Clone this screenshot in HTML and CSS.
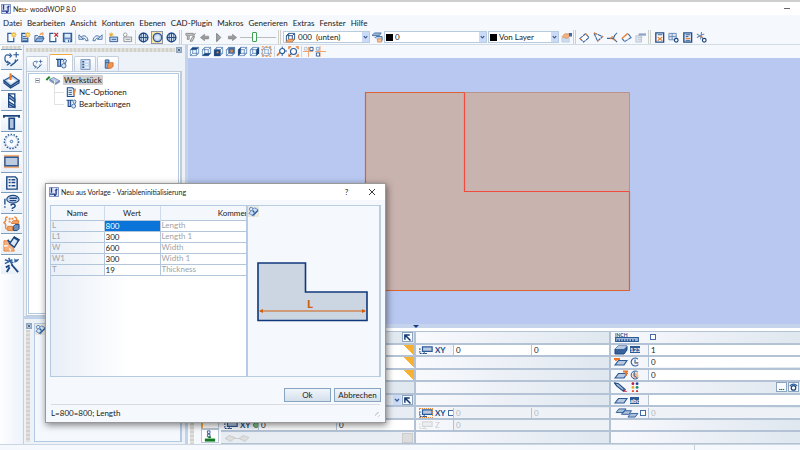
FILE: index.html
```html
<!DOCTYPE html>
<html lang="de">
<head>
<meta charset="utf-8">
<title>Neu- woodWOP 8.0</title>
<link rel="stylesheet" href="styles.css">
</head>
<body>
<svg class="defs" aria-hidden="true">
  <symbol id="logo" viewBox="0 0 12 12"><path d="M.5.500h11v11H.5z" fill="#dde5f6" stroke="#6678b4"/><path d="M3 1v6M1 8.500h6M8.500 3v5q0 2-2.500 2" fill="none" stroke="#243a8c" stroke-width="1.600"/><path d="M6.500 4.500l3-3 1 2z" fill="#243a8c"/></symbol>
  <symbol id="star" viewBox="0 0 12 12"><path d="M8.500 0v6M5.500 3h6M6.400.900l4.200 4.200M10.600.900L6.400 5.100" stroke="#f0b02c" stroke-width="1.200"/><circle cx="8.500" cy="3" r="1.200" fill="#fff3a8"/></symbol>
  <symbol id="new" viewBox="0 0 12 12"><path d="M6 1.500H2v9h6.500V6" fill="#f8fbff" stroke="#2b5a96" stroke-width="1.300"/><use href="#star"/></symbol>
  <symbol id="newlist" viewBox="0 0 12 12"><path d="M6 1.500H2v9h6.500V6" fill="#dce9f8" stroke="#2b5a96" stroke-width="1.300"/><path d="M3 5h4M3 7h5M3 9h5" stroke="#2b5a96"/><use href="#star"/></symbol>
  <symbol id="open" viewBox="0 0 12 12"><path d="M1 10.500V4h3l1 1h5v2" fill="#eaf2fb" stroke="#2b5a96"/><path d="M1 10.500L3.500 6.500H11l-2 4z" fill="#8fb0d8" stroke="#2b5a96"/><path d="M6 3.500l3-2M7 1.500l3-.5-.5 3" stroke="#ee8a3c" fill="none"/></symbol>
  <symbol id="close" viewBox="0 0 12 12"><path d="M6 1.500H2v9h6.500V6" fill="#f8fbff" stroke="#2b5a96" stroke-width="1.300"/><path d="M7 1l4 4M11 1L7 5" stroke="#c1272d" stroke-width="1.400"/></symbol>
  <symbol id="save" viewBox="0 0 12 12"><path d="M1.500 1.500h9v9h-9z" fill="#6b91c0" stroke="#2b5a96" stroke-width="1.200"/><path d="M3 2h6v4H3z" fill="#dfeaf7"/><path d="M3.500 8h5v3h-5z" fill="#e7eef8"/><path d="M7 8.500V11" stroke="#2b5a96"/></symbol>
  <symbol id="undo" viewBox="0 0 12 12"><path d="M1 3v5h5L1 3M3 6C6 2.500 10 4 11 9.500H8.500Q8 6 4.500 7" fill="#e8f0fa" stroke="#34649f" stroke-width=".9"/></symbol>
  <symbol id="redo" viewBox="0 0 12 12"><use href="#undo" transform="matrix(-1 0 0 1 12 0)"/></symbol>
  <symbol id="boxnew" viewBox="0 0 12 12"><path d="M2 5.500h8.500v5H2z" fill="#c4d7ee" stroke="#2b5a96"/><path d="M4 8h5" stroke="#2b5a96"/><path d="M3.500.500v5M1 3h5M1.700 1.200l3.600 3.600M5.300 1.200L1.700 4.800" stroke="#f0a92c"/></symbol>
  <symbol id="boxgray" viewBox="0 0 12 12"><path d="M2 5.500h8.500v5H2z" fill="#eee" stroke="#8b9098"/><path d="M4 8h5" stroke="#8b9098"/><circle cx="3.500" cy="3" r="2" fill="none" stroke="#999"/></symbol>
  <symbol id="globe" viewBox="0 0 12 12"><circle cx="6" cy="6" r="4.800" fill="#cfe0f4" stroke="#1c4680" stroke-width="1.400"/><path d="M1 6h10M6 1v10" stroke="#1c4680" stroke-width="1"/><ellipse cx="6" cy="6" rx="2.600" ry="4.800" fill="none" stroke="#1c4680" stroke-width=".8"/></symbol>
  <symbol id="disc" viewBox="0 0 12 12"><circle cx="6" cy="6" r="4.600" fill="#bcd0ec" stroke="#2b5a96" stroke-width="1.400"/><circle cx="6" cy="6" r="2.400" fill="#dfe9f7"/></symbol>
  <symbol id="clamp" viewBox="0 0 12 12"><path d="M1 1.500h8v2H1zM2.500 4v4h2V4M5.500 10l3-5h2L8 10z" fill="#d5d5d5" stroke="#858585"/><path d="M9 5l2.500-4" stroke="#858585"/></symbol>
  <symbol id="left" viewBox="0 0 12 12"><path d="M1.500 6L6 2.500v2h4.500v3H6v2z" fill="#9b9b9b" stroke="#7b7b7b" stroke-width=".6"/></symbol>
  <symbol id="right" viewBox="0 0 12 12"><path d="M10.500 6L6 2.500v2H1.500v3H6v2z" fill="#9b9b9b" stroke="#7b7b7b" stroke-width=".6"/></symbol>
  <symbol id="play" viewBox="0 0 12 12"><path d="M4 1.500L8.500 6 4 10.500z" fill="#a5a5a5" stroke="#777"/></symbol>
  <symbol id="cube" viewBox="0 0 12 12"><path d="M1.500 4h6.500v6.500H1.500zM4 1.500h6.500V8H4zM1.500 4L4 1.500M8 4l2.500-2.500M8 10.500L10.500 8M1.500 10.500L4 8" fill="none" stroke="#4c78ae" stroke-width=".8"/></symbol>
  <symbol id="v1" viewBox="0 0 12 12"><use href="#cube"/><path d="M1.500 4L4 1.500h6.500L8 4z" fill="#1c4680"/></symbol>
  <symbol id="v2" viewBox="0 0 12 12"><use href="#cube"/><path d="M1.500 10.500L4 8h6.500L8 10.500z" fill="#1c4680"/></symbol>
  <symbol id="v3" viewBox="0 0 12 12"><use href="#cube"/><path d="M1.200 4H8v7H1.200z" fill="#1c4680"/><path d="M4 6h2v2H4z" fill="#f0883a"/></symbol>
  <symbol id="v4" viewBox="0 0 12 12"><use href="#cube"/><path d="M4 1.500h6.500V8H4z" fill="#426da3"/><path d="M6 4h2.500v3H6z" fill="#f0883a"/></symbol>
  <symbol id="v5" viewBox="0 0 12 12"><use href="#cube"/><path d="M1.200 4L4 1.500V8l-2.800 3z" fill="#1c4680"/></symbol>
  <symbol id="v6" viewBox="0 0 12 12"><use href="#cube"/><path d="M8 4l3-2.500V8l-3 3z" fill="#1c4680"/></symbol>
  <symbol id="v7" viewBox="0 0 12 12"><use href="#cube" opacity=".7"/><path d="M1 1h10v10H1z" fill="none" stroke="#f0883a" stroke-width="1.300" stroke-dasharray="2 2"/></symbol>
  <symbol id="mag" viewBox="0 0 12 12"><path d="M1 10.500L4.500 7" stroke="#d97a35" stroke-width="1.700"/><circle cx="6.800" cy="5.500" r="2.800" fill="#fff" stroke="#2b5a96" stroke-width="1.200"/><path d="M6.800.500v2M6.800 8v3M9.500 5.500h2.500" stroke="#2b5a96"/></symbol>
  <symbol id="fit" viewBox="0 0 12 12"><circle cx="6" cy="6" r="3.300" fill="#fff" stroke="#2b5a96" stroke-width="1.200"/><path d="M1 3.500V1h2.500M8.500 1H11v2.500M11 8.500V11H8.500M3.500 11H1V8.500" fill="none" stroke="#e87c2e" stroke-width="1.400"/><path d="M1.500 10.500L4 8" stroke="#2b5a96"/></symbol>
  <symbol id="sn1" viewBox="0 0 12 12"><path d="M6 1v11M0 6h11" stroke="#eda066"/><path d="M7.500 1.500H11V5H7.500z" fill="#fff" stroke="#2b5a96"/><path d="M1.500 1.500h3v3h-3z" fill="none" stroke="#b9c2cf"/></symbol>
  <symbol id="sn2" viewBox="0 0 12 12"><path d="M5.500 0v12M0 6h12" stroke="#eda066"/><path d="M1.500 7.500H5V11H1.500z" fill="#fff" stroke="#2b5a96"/><path d="M1.500 1.500h3v3h-3z" fill="none" stroke="#8da6c9"/></symbol>
  <symbol id="plane" viewBox="0 0 12 12"><path d="M1.500 4h6.500v6.500H1.500zM4 1.500h6.500V8H4zM1.500 4L4 1.500M8 4l2.500-2.500M8 10.500L10.500 8" fill="none" stroke="#234f88"/><path d="M1 11l2.500-3h7L8 11z" fill="#f3a56b" stroke="#d46c22" stroke-width=".6"/></symbol>
  <symbol id="layers" viewBox="0 0 12 12"><path d="M.5 3L3 1h7L8 4H.5z" fill="#9ab7dc" stroke="#2b5a96" stroke-width=".8"/><path d="M3 6.500L4.500 5H11v4l-2 2" fill="#c2d4eb" stroke="#34649f"/><path d="M6 7.500h4.500V11H6z" fill="#f4c49b" stroke="#d97a35" stroke-width=".7"/></symbol>
  <symbol id="hand" viewBox="0 0 12 12"><path d="M1 6.500h8V11H1z" fill="#cddcf0" stroke="#b0c2dd" stroke-width=".7"/><path d="M1 5.500L4 2h5l.5 3L6 7 4 6z" fill="#f2b283" stroke="#d98a55" stroke-width=".7"/><path d="M8.500 1H12v4H9z" fill="#3f6aa5"/></symbol>
  <symbol id="m1" viewBox="0 0 12 12"><path d="M1 7l6-5 4 4-6 5z" fill="#fff" stroke="#3b689f" stroke-width="1.200" stroke-dasharray="4 .6"/><path d="M7 1.500l2 2M1 7l1.500 1.500" stroke="#e8833a" stroke-width="1.200"/></symbol>
  <symbol id="m2" viewBox="0 0 12 12"><path d="M1 1l9.500 4-5.500 5z" fill="none" stroke="#3b689f" stroke-width="1.200" stroke-dasharray="4 .6"/><path d="M1 1l3 1.500M5 10l1-1.500M9 4.500l2 .5" stroke="#e8833a" stroke-width="1.400"/></symbol>
  <symbol id="m3" viewBox="0 0 12 12"><path d="M0 7h7M11 1Q8 3 7 7l4 4" fill="none" stroke="#3b689f" stroke-width="1.200"/><path d="M4 8c0-2 1-3 3-3M6 8l3 1" fill="none" stroke="#e8833a" stroke-width="1.200"/></symbol>
  <symbol id="m4" viewBox="0 0 12 12"><path d="M1 7l3 3.500L11 6 7.500 1.500" fill="none" stroke="#3b689f" stroke-width="1.200" stroke-dasharray="4 .6"/><path d="M1 7l6.500-5.500" stroke="#e8833a" stroke-width="1.500"/></symbol>
  <symbol id="m5" viewBox="0 0 12 12"><path d="M1 4h6v7H1zM3 6h5M3 8.500h4" fill="#e3e8ee" stroke="#b8c3d1"/><path d="M4 1.500h8v2.500H4z" fill="#8fa5c3"/></symbol>
  <symbol id="d1" viewBox="0 0 12 12"><path d="M2 1h8.500v10H2z" fill="#fff" stroke="#234f88" stroke-width="1.500"/><path d="M4 3h5" stroke="#234f88"/><path d="M4 5.500l5 4M9 5.500l-5 4" stroke="#e8833a" stroke-width="1.400"/></symbol>
  <symbol id="d2" viewBox="0 0 12 12"><path d="M1 1.500h8v7H1zM1 5h8M4.500 1.500v7" fill="#dce7f5" stroke="#6688b5"/><circle cx="9" cy="9" r="2" fill="#fff" stroke="#1c4680" stroke-width="1.300"/></symbol>
  <symbol id="d3" viewBox="0 0 12 12"><path d="M2 1h8.500v10H2z" fill="#e0eaf8" stroke="#234f88" stroke-width="1.500"/><path d="M4 3h5M4 5h3M4 9.500h5" stroke="#234f88"/><path d="M4 7.200h5" stroke="#e8833a" stroke-width="1.400"/></symbol>
  <symbol id="d4" viewBox="0 0 12 12"><path d="M1 2l7 5M6 0L5 8M1 6l8-4" stroke="#5c7dab" stroke-width="1.100"/><path d="M5 4l2 2" stroke="#e8833a" stroke-width="1.500"/><circle cx="9" cy="9" r="2" fill="#fff" stroke="#1c4680" stroke-width="1.300"/></symbol>

  <symbol id="contour" viewBox="0 0 18 18"><path d="M8 5Q2 2 2 8q0 4 4 5M13 9q1 3-2 4.500l-3 2" fill="none" stroke="#2b5a96" stroke-width="1.300"/><path d="M4 10.500l3.500 2.500-3.500 2M14 1v6M11 4h6M7 2.500l2 2.500-2 2M8 16l8-7" fill="none" stroke="#2b5a96" stroke-width="1.200"/></symbol>
  <symbol id="pocket" viewBox="0 0 18 18"><path d="M1 9l9-5 7 5-9 6z" fill="#c5d6ec" stroke="#2b5a96" stroke-width="1.200"/><path d="M1 9v2.500L8 17l9-5.500V9l-9 6z" fill="#7f9dc5" stroke="#1c4680" stroke-width="1.200"/><path d="M4.500 9L9 6.500 13.500 9 9 12z" fill="#fff"/><path d="M8 1.500v7" stroke="#ee7622" stroke-width="2.200"/></symbol>
  <symbol id="drill" viewBox="0 0 18 18"><path d="M6 2h6.500v14H6z" fill="#fff" stroke="#1c4680" stroke-width="1.400"/><path d="M6 2.500l6.500 5v3L6 6zM6 10l6.500 4v2.500L6 13z" fill="#7f9dc5" stroke="#1c4680" stroke-width="1.300"/></symbol>
  <symbol id="tee" viewBox="0 0 18 18"><path d="M1 3h16M1 2v3M17 2v3" stroke="#1c4680" stroke-width="2"/><path d="M6.500 5.500h5.500V17H6.500z" fill="#aec4e1" stroke="#1c4680" stroke-width="1.700"/></symbol>
  <symbol id="saw" viewBox="0 0 18 18"><circle cx="9" cy="9" r="7.500" fill="none" stroke="#2b5a96" stroke-width="1.600" stroke-dasharray="1.600 1.500"/><circle cx="9" cy="9" r="6.500" fill="#f8fbff" stroke="#9db5d3" stroke-width=".8"/><circle cx="9" cy="9" r="1.300" fill="none" stroke="#34649f"/></symbol>
  <symbol id="plate" viewBox="0 0 18 18"><path d="M1 2h16v14H1z" fill="#f2ae78"/><path d="M2 4.500h14v9H2z" fill="#bdcbe0" stroke="#2b5a96" stroke-width="1.500"/></symbol>
  <symbol id="doc" viewBox="0 0 18 18"><path d="M4 3h9l2 2v11H4z" fill="#eef4fb" stroke="#1c4680" stroke-width="1.500"/><path d="M6 6h2M9 6h4M6 9h2M9 9h4M6 12.500h2M9 12.500h4" stroke="#1c4680" stroke-width="1.500"/></symbol>
  <symbol id="ask" viewBox="0 0 18 18"><ellipse cx="10.500" cy="5.500" rx="6.500" ry="4" fill="#c7d8ee" stroke="#1c4680" stroke-width="1.200"/><path d="M7 4.500h8M7 7h7M2 5v6M2 13v1.500" stroke="#1c4680" stroke-width="1.400"/><path d="M8 12q3-2.500 4.500-.5T10 15v1M10 17v1" fill="none" stroke="#1c4680" stroke-width="1.600"/></symbol>
  <symbol id="blocks" viewBox="0 0 18 18"><path d="M5 2Q2 2 3 5q0 2-2 3 2 1 2 3-1 4 2 4M12 2q3 0 2.500 5" fill="none" stroke="#ee8a3c" stroke-width="1.600"/><path d="M6 4h2M9 4h2M6 7h2" stroke="#ee8a3c" stroke-width="2"/><path d="M9 8l2-2h5.500v3H9zM5 12h5v4.500H5z" fill="#f2a466" stroke="#d97a35"/><path d="M11 12l2-2h4v4.500l-2 2h-4z" fill="#6f90bb" stroke="#1c4680"/></symbol>
  <symbol id="edge" viewBox="0 0 18 18"><path d="M1 6q8-1 11 11H1z" fill="#f4b183" stroke="#e8833a"/><path d="M1 11.500h4M8 17l-1-3" stroke="#fff" stroke-width="1.200"/><path d="M7 9l5-7 5 3-5 8z" fill="#dbe7f6" stroke="#1c4680" stroke-width="1.500"/><path d="M11 2.500l6 3.500M7 8l-2-3" stroke="#1c4680" stroke-width="1.800"/></symbol>
  <symbol id="tools" viewBox="0 0 18 18"><path d="M2 4l9 3M6 2l4 8M2 8l8-4" stroke="#34649f" stroke-width="1.600" fill="none"/><path d="M12 2q1 3 5 1-1 4-5 4z" fill="#34649f"/><path d="M3 12l4-2M4 17l3-5M9 9l7 8" stroke="#1c4680" stroke-width="2"/></symbol>

  <symbol id="bearb" viewBox="0 0 12 12"><path d="M0 1.500h8M2 2v7h3V2" fill="#a9c0df" stroke="#1f4c88" stroke-width="1.300"/><path d="M7.500 3.500L9.500 1l2 1.500-1.500 4z" fill="#dce7f6" stroke="#34649f"/><circle cx="8.500" cy="8.500" r="2.400" fill="#dce7f6" stroke="#34649f"/></symbol>
  <symbol id="list" viewBox="0 0 12 12"><path d="M1 .5h10v11H1z" fill="#c9d9ee" stroke="#7896c0"/><path d="M2.500 3h2M2.500 6h2M2.500 9h2" stroke="#2b5a96" stroke-width="1.500"/><path d="M6 3h3.500M6 6h2.500M6 9h3.500" stroke="#fff"/></symbol>
  <symbol id="stamp" viewBox="0 0 12 12"><path d="M2.500 1h4v9h-4zM2.500 4h4" fill="#8eabd1" stroke="#2b5a96"/><path d="M5 6l2-2h4v4L9 10H5z" fill="#f0944e" stroke="#c8641f" stroke-width=".8"/></symbol>
  <symbol id="piece" viewBox="0 0 16 12"><path d="M0 6l4-4" stroke="#15841b" stroke-width="2.200"/><path d="M4 5l5-2 7 4-5 3z" fill="#b9cae0" stroke="#5d7da9" stroke-width=".8"/><path d="M4 5v2l7 4.500 5-3V7l-5 3z" fill="#87a2c6" stroke="#5d7da9" stroke-width=".7"/></symbol>
  <symbol id="nc" viewBox="0 0 12 12"><path d="M1 .8h6l2 2v8.500H1z" fill="#e3edf9" stroke="#1f4c88" stroke-width="1.300"/><path d="M2.500 4h4M2.500 6.500h4M2.500 9h4" stroke="#1f4c88"/><path d="M10.800 2L8.500 11" stroke="#ee8a3c" stroke-width="1.600"/></symbol>
  <symbol id="note" viewBox="0 0 12 12"><path d="M0 0h12v12H0z" fill="#e9e9df"/><circle cx="3.500" cy="3.500" r="2" fill="#dce8f6" stroke="#5a83b8"/><path d="M1 8l6-6 4 2-5 7z" fill="#d3e2f4" stroke="#5a83b8" stroke-width="1"/><path d="M5 10l6-5M5 5l2 2" stroke="#34649f" stroke-width="1.500"/></symbol>
  <symbol id="pick" viewBox="0 0 12 12"><path d="M2.500 9V2.500H9M2.500 2.500L10 10" fill="none" stroke="#173a75" stroke-width="2"/></symbol>
  <symbol id="tag" viewBox="0 0 16 10"><path d="M4 1.500h11v5H4z" fill="#b9cae2" stroke="#2b5a96" stroke-width="1.400"/><path d="M1 3v6M1 9h9M6 7.500v2" stroke="#1c4680" stroke-width="1.200" stroke-dasharray="2 1"/></symbol>
  <symbol id="inch" viewBox="0 0 26 11"><path d="M.5 6h25v4.500H.5z" fill="#9db8da" stroke="#2b5a96" stroke-width="1.200"/><path d="M3 8v2M6 8v2M9 8v2M12 8v2M15 8v2M18 8v2M21 8v2" stroke="#1c4680" stroke-width="1.200"/></symbol>
  <symbol id="slab" viewBox="0 0 14 10"><path d="M1 4l3-3h9v4l-3 4H1z" fill="#36619b" stroke="#1c4680"/><path d="M1 4l3-3h9l-3 3z" fill="#b7cae4"/></symbol>
  <symbol id="sheet" viewBox="0 0 14 10"><path d="M1 8l3.500-4.500H13L10 8z" fill="#b7c8df" stroke="#2b5a96" stroke-width="1.200"/></symbol>
  <symbol id="sheetl" viewBox="0 0 14 10"><use href="#sheet"/><path d="M0 2h6M2 1v3" stroke="#ec7728" stroke-width="1.800"/></symbol>
  <symbol id="sheetr" viewBox="0 0 14 10"><use href="#sheet"/><path d="M9 1.500h5M12 1v5" stroke="#ec7728" stroke-width="1.800"/></symbol>
  <symbol id="clock" viewBox="0 0 12 12"><path d="M9.500 2.500A4.800 4.800 0 1 0 10 9M6 3v4h4" fill="none" stroke="#2b5a96" stroke-width="1.300"/><path d="M6 7h3.500" stroke="#ec7728"/></symbol>
  <symbol id="clock2" viewBox="0 0 12 12"><circle cx="6.500" cy="6.500" r="3.500" fill="#f5b88c"/><path d="M9.500 2.500A4.800 4.800 0 1 0 10 9M5 2v5l3 2" fill="none" stroke="#2b5a96" stroke-width="1.200"/></symbol>
  <symbol id="brush" viewBox="0 0 16 12"><path d="M0 1l5 1 8 7-2 2L3 5z" fill="#a3bad9" stroke="#1c4680" stroke-width="1.300"/><path d="M10 8l6 4-5-.5z" fill="#b61f44"/></symbol>
  <symbol id="dots" viewBox="0 0 10 12"><circle cx="2.500" cy="2" r="1.700" fill="#b61f44"/><circle cx="7.500" cy="2" r="1.700" fill="#2443a0"/><circle cx="2.500" cy="6.500" r="1.700" fill="#f0a22c"/><circle cx="7.500" cy="6.500" r="1.700" fill="#15916a"/><circle cx="2.500" cy="11" r="1.300" fill="#e2552d"/><circle cx="7.500" cy="11" r="1.300" fill="#c33"/></symbol>
  <symbol id="stack" viewBox="0 0 26 11"><path d="M1 5l3-4h8L9 5zM7 7l3-4h8l-3 4zM14 10l3-4h8l-3 4z" fill="#aabfdb" stroke="#2b5a96"/></symbol>
  <symbol id="gear" viewBox="0 0 12 12"><circle cx="6" cy="6.500" r="3" fill="#fff" stroke="#1c4680" stroke-width="1.600"/><path d="M1 4q5-5 10 0" fill="none" stroke="#34649f" stroke-width="1.500"/></symbol>
  <symbol id="pair" viewBox="0 0 26 9"><path d="M1 5l4-3 6 2-4 4zM15 5l4-3 6 2-4 4zM10 5h6" fill="#ddd" stroke="#ccc"/></symbol>
  <symbol id="saetze" viewBox="0 0 14 14"><path d="M4 1h3v3H4zM4 5h3v3H4z" fill="#fff" stroke="#2b4f9a"/><path d="M1 10h12v3.500H1z" fill="#117a22"/><path d="M5 8.500h3" stroke="#117a22" stroke-width="2"/></symbol>
  <symbol id="x" viewBox="0 0 6 6"><path d="M1 1l4 4M5 1L1 5" stroke="#16365f" stroke-width="1"/></symbol>
  <symbol id="chev" viewBox="0 0 6 6"><path d="M1.500 2.200L3 3.700l1.500-1.500" fill="none" stroke="#3a5c94" stroke-width="1"/></symbol>
</svg>

<header class="titlebar"><svg class="logo"><use href="#logo"/></svg><h1>Neu- woodWOP 8.0</h1><button class="minimize" aria-label="Minimieren"></button></header>
<nav class="menubar">
  <a href="#">Datei</a><a href="#">Bearbeiten</a><a href="#">Ansicht</a><a href="#">Konturen</a><a href="#">Ebenen</a><a href="#">CAD-Plugin</a><a href="#">Makros</a><a href="#">Generieren</a><a href="#">Extras</a><a href="#">Fenster</a><a href="#">Hilfe</a>
</nav>
<div class="toolbar">
  <div class="group"><button aria-label="Neu"><svg><use href="#new"/></svg></button><button aria-label="Neu aus Vorlage"><svg><use href="#newlist"/></svg></button><button aria-label="Öffnen"><svg><use href="#open"/></svg></button><button aria-label="Schließen"><svg><use href="#close"/></svg></button><button aria-label="Speichern"><svg><use href="#save"/></svg></button></div>
  <div class="group"><button aria-label="Rückgängig"><svg><use href="#undo"/></svg></button><button aria-label="Wiederholen"><svg><use href="#redo"/></svg></button></div>
  <div class="group"><button aria-label="Komponente neu"><svg><use href="#boxnew"/></svg></button><button aria-label="Komponente"><svg><use href="#boxgray"/></svg></button></div>
  <div class="group"><button aria-label="Drahtmodell"><svg><use href="#globe"/></svg></button><button class="on" aria-label="Schattiert"><svg><use href="#disc"/></svg></button><button aria-label="Schattiert mit Kanten"><svg><use href="#globe"/></svg></button></div>
  <div class="group handle"><button aria-label="Simulation"><svg><use href="#clamp"/></svg></button><button aria-label="Zurück"><svg><use href="#left"/></svg></button><button aria-label="Start"><svg><use href="#play"/></svg></button><button aria-label="Vor"><svg><use href="#right"/></svg></button><input class="slider" type="range" min="0" max="100" value="38" aria-label="Geschwindigkeit"></div>
  <div class="group handle combos">
    <span class="combo plane"><svg><use href="#plane"/></svg><select aria-label="Ebene"><option>000&nbsp; (unten)</option></select><svg class="chev"><use href="#chev"/></svg></span>
    <button aria-label="Layer verwalten"><svg><use href="#layers"/></svg></button>
    <span class="combo layer"><i class="swatch"></i><select aria-label="Layer"><option>0</option></select><svg class="chev"><use href="#chev"/></svg></span>
    <span class="combo color"><i class="swatch"></i><select aria-label="Farbe"><option>Von Layer</option></select><svg class="chev"><use href="#chev"/></svg></span>
    <button aria-label="Eigenschaften"><svg><use href="#hand"/></svg></button>
  </div>
  <div class="group handle"><button aria-label="Messen 1"><svg><use href="#m1"/></svg></button><button aria-label="Messen 2"><svg><use href="#m2"/></svg></button><button aria-label="Messen 3"><svg><use href="#m3"/></svg></button><button aria-label="Messen 4"><svg><use href="#m4"/></svg></button><button aria-label="Messen 5"><svg><use href="#m5"/></svg></button></div>
  <div class="group handle"><button aria-label="Programm"><svg><use href="#d1"/></svg></button><button aria-label="Tabelle"><svg><use href="#d2"/></svg></button><button aria-label="Datei"><svg><use href="#d3"/></svg></button><button aria-label="Werkzeuge"><svg><use href="#d4"/></svg></button></div>
</div>

<div class="workspace">
  <aside class="sidebar">
    <div class="grip"></div>
    <div class="tools">
      <button aria-label="Kontur"><svg><use href="#contour"/></svg></button><button aria-label="Tasche"><svg><use href="#pocket"/></svg></button><button aria-label="Bohren"><svg><use href="#drill"/></svg></button><button aria-label="Fräsen"><svg><use href="#tee"/></svg></button><button aria-label="Sägen"><svg><use href="#saw"/></svg></button><button aria-label="Platte"><svg><use href="#plate"/></svg></button><button aria-label="Kommentar"><svg><use href="#doc"/></svg></button><button aria-label="Abfrage"><svg><use href="#ask"/></svg></button><button aria-label="Bausteine"><svg><use href="#blocks"/></svg></button><button aria-label="Kante"><svg><use href="#edge"/></svg></button><button aria-label="Sonderwerkzeuge"><svg><use href="#tools"/></svg></button>
    </div>
  </aside>

  <aside class="docks">
    <section class="dock project">
      <div class="dockbar"><div class="grip"></div><button class="x" aria-label="Bereich schließen"><svg><use href="#x"/></svg></button></div>
      <div class="tabs"><button aria-label="Konturen"><svg><use href="#contour"/></svg></button><button class="active" aria-label="Bearbeitungen"><svg><use href="#bearb"/></svg></button><button aria-label="Variablen"><svg><use href="#list"/></svg></button><button aria-label="Komponenten"><svg><use href="#stamp"/></svg></button></div>
      <div class="treebox"><div class="treeinner">
        <ul class="tree">
          <li><div class="node"><span class="expander"></span><svg class="wide"><use href="#piece"/></svg><span class="selected">Werkstück</span></div>
            <ul><li class="node"><svg><use href="#nc"/></svg>NC-Optionen</li><li class="node"><svg><use href="#bearb"/></svg>Bearbeitungen</li></ul>
          </li>
        </ul>
      </div></div>
    </section>
    <section class="dock preview-dock">
      <div class="vbar"><button class="x" aria-label="Vorschau schließen"><svg><use href="#x"/></svg></button><div class="grip"></div></div>
      <div class="notebox"><svg class="note"><use href="#note"/></svg></div>
    </section>
  </aside>

  <main class="main">
    <div class="views">
      <div class="viewgroup"><button aria-label="Oben"><svg><use href="#v1"/></svg></button><button aria-label="Unten"><svg><use href="#v2"/></svg></button><button aria-label="Vorne"><svg><use href="#v3"/></svg></button><button aria-label="Hinten"><svg><use href="#v4"/></svg></button><button aria-label="Links"><svg><use href="#v5"/></svg></button><button aria-label="Rechts"><svg><use href="#v6"/></svg></button><button aria-label="3D"><svg><use href="#v7"/></svg></button></div>
      <div class="viewgroup"><button aria-label="Zoom"><svg><use href="#mag"/></svg></button><button aria-label="Alles zeigen"><svg><use href="#fit"/></svg></button></div>
      <div class="viewgroup"><button aria-label="Fang 1"><svg><use href="#sn1"/></svg></button><button aria-label="Fang 2"><svg><use href="#sn2"/></svg></button></div>
    </div>
    <svg class="canvas" viewBox="0 0 612 264" preserveAspectRatio="xMidYMid slice">
      <path d="M177.500 34.500h264v198h-264z" fill="#c9b3ae" stroke="#b99388"/>
      <path d="M276.500 34.500h-99v198h264v-99" fill="none" stroke="#dc6232" stroke-width="1.200"/>
      <path d="M276.500 34.500v99h165" fill="none" stroke="#f24a3c" stroke-width="1.200"/>
    </svg>
    <div class="splitter"><i></i></div>
    <div class="params">
      <div class="grip"></div>
      <div class="paramtabs"><button aria-label="Allgemein"></button><button class="front" aria-label="Sätze"><svg><use href="#saetze"/></svg></button></div>
      <form class="fields">
        <div class="col">
          <div class="row"><span class="fill"></span><button type="button" class="pick" aria-label="Position wählen"><svg><use href="#pick"/></svg></button></div>
          <div class="row formula"><input aria-label="Länge"></div>
          <div class="row formula"><input aria-label="Breite"></div>
          <div class="row formula"><input aria-label="Dicke"></div>
          <div class="row"></div>
          <div class="row"><span class="fill"></span><svg class="chev"><use href="#chev"/></svg><button type="button" class="pick" aria-label="Nullpunkt wählen"><svg><use href="#pick"/></svg></button></div>
          <div class="row off"></div>
          <div class="row"><span class="lead"><svg class="tagicon"><use href="#tag"/></svg><b>XY</b><input type="radio" checked aria-label="XY relativ"></span><input value="0" aria-label="X"><input value="0" aria-label="Y"></div>
          <div class="row off"><svg class="inchicon"><use href="#pair"/></svg><span class="fill"></span><button type="button" class="pick" disabled aria-label="Punkt wählen"></button></div>
        </div>
        <div class="col">
          <div class="row"></div>
          <div class="row"><span class="lead"><svg class="tagicon"><use href="#tag"/></svg><b>XY</b></span><input value="0" aria-label="Offset X"><input value="0" aria-label="Offset Y"></div>
          <div class="row"></div><div class="row"></div><div class="row"></div><div class="row"></div>
          <div class="row"><span class="lead"><svg class="tagicon dashed"><use href="#tag"/></svg><b>XY</b><input type="checkbox" aria-label="Rohteil XY"></span><input value="0" disabled aria-label="Rohteil X"><input value="0" disabled aria-label="Rohteil Y"></div>
          <div class="row"><span class="lead faint"><svg class="tagicon"><use href="#tag"/></svg><b>Z</b></span><input value="0" disabled aria-label="Rohteil Z"></div>
          <div class="row"></div>
        </div>
        <div class="col wide">
          <div class="row"><label class="lead inch" for="inch"><svg class="inchicon"><use href="#inch"/></svg><b>INCH</b></label><input type="checkbox" id="inch"></div>
          <div class="row"><label class="lead" for="anz"><svg><use href="#slab"/></svg><b class="chip">123</b></label><input id="anz" value="1"></div>
          <div class="row"><span class="lead"><svg><use href="#sheetl"/></svg><svg class="round"><use href="#clock"/></svg></span><input value="0" aria-label="Zeit Start"></div>
          <div class="row"><span class="lead"><svg><use href="#sheetr"/></svg><svg class="round"><use href="#clock2"/></svg></span><input value="0" aria-label="Zeit Ende"></div>
          <div class="row"><span class="lead"><svg><use href="#brush"/></svg><svg class="round"><use href="#dots"/></svg></span><span class="fill"></span><button type="button" class="pick" aria-label="Farbe wählen">...</button><button type="button" class="pick" aria-label="Einstellungen"><svg><use href="#gear"/></svg></button></div>
          <div class="row"><label class="lead" for="txt"><svg><use href="#sheet"/></svg><b class="chip">abc</b></label><input id="txt"></div>
          <div class="row"><span class="lead tight"><svg class="inchicon"><use href="#stack"/></svg><input type="checkbox" aria-label="Stapel"></span><input value="0" disabled aria-label="Stapelanzahl"></div>
          <div class="row"></div><div class="row"></div>
        </div>
      </form>
    </div>
  </main>
</div>
<footer class="status"><span></span><span></span></footer>

<div class="dialog" role="dialog" aria-labelledby="dlgtitle">
  <div class="dlghead"><svg class="logo"><use href="#logo"/></svg><h2 id="dlgtitle">Neu aus Vorlage - Variableninitialisierung</h2><button aria-label="Hilfe">?</button><button aria-label="Dialog schließen"><svg viewBox="0 0 8 8"><path d="M1 1l6 6M7 1L1 7" stroke="#222" stroke-width=".9"/></svg></button></div>
  <div class="dlgbody">
    <div class="vars">
      <table>
        <thead><tr><th class="name">Name</th><th class="value">Wert</th><th>Kommentar</th></tr></thead>
        <tbody>
          <tr><td>L</td><td><input class="picked" value="800" aria-label="L"></td><td>Length</td></tr>
          <tr><td>L1</td><td><input value="300" aria-label="L1"></td><td>Length 1</td></tr>
          <tr><td>W</td><td><input value="600" aria-label="W"></td><td>Width</td></tr>
          <tr><td>W1</td><td><input value="300" aria-label="W1"></td><td>Width 1</td></tr>
          <tr><td>T</td><td><input value="19" aria-label="T"></td><td>Thickness</td></tr>
        </tbody>
      </table>
    </div>
    <div class="sketch"><svg class="note"><use href="#note"/></svg>
      <svg class="drawing" viewBox="0 0 112 62"><path d="M2 2h47.500v29H111v28.500H2z" fill="#ccd6e2" stroke="#10397c" stroke-width="1.600"/><path d="M4 50h105" stroke="#d05f0c" stroke-width="1.100"/><path d="M3 50l4-2v4zM110 50l-4-2v4z" fill="#d05f0c"/><text x="54" y="47">L</text></svg>
    </div>
  </div>
  <div class="dlgbuttons"><button>Ok</button><button>Abbrechen</button></div>
  <div class="dlgstatus">L=800=800; Length<i class="sizegrip"></i></div>
</div>
</body>
</html>
```
FILE: styles.css
```css
* { box-sizing: border-box; }
body {
  margin: 0; height: 100vh; overflow: hidden; display: flex; flex-direction: column;
  background: #f5f8fd; color: #222; font: 8px/10px Lato, "Open Sans", sans-serif;
  border-top: 2px solid #cfcfcf;
}
button, input, select { font: inherit; color: inherit; margin: 0; padding: 0; border: 0; background: none; border-radius: 0; min-width: 0; outline: 0; }
button { display: flex; align-items: center; justify-content: center; }
a { color: inherit; text-decoration: none; }
h1, h2 { margin: 0; font-size: 7px; font-weight: 400; }
ul { list-style: none; margin: 0; padding: 0; }
svg { display: block; width: 12px; height: 12px; flex: none; }
.defs { position: absolute; width: 0; height: 0; }
.grip { background: repeating-linear-gradient(90deg, #d3d1cb 0 2px, #e2e0da 2px 4px); }

.titlebar { flex: none; height: 13px; display: flex; align-items: center; gap: 2px; padding: 0 6px 0 1px; background: #fff; }
.logo { width: 10px; height: 10px; }
.minimize { width: 14px; height: 10px; margin-left: auto; }
.minimize::before { content: ""; width: 6px; height: 1px; background: #666; }
.menubar { flex: none; height: 15px; display: flex; align-items: center; gap: 5px; padding: 0 3px; }

.toolbar { flex: none; height: 15px; display: flex; align-items: center; padding-left: 4px; border-bottom: 1px solid #d3dbe4; }
.group { display: flex; align-items: center; gap: 2px; height: 14px; padding: 0 1px; }
.group button { width: 12px; height: 13px; }
.group svg { width: 11px; height: 11px; }
.group + .group { border-left: 1px solid #c5d3e4; margin-left: 1px; }
.group + .handle { border-left: 3px double #cfcfca; padding-left: 2px; margin-left: 1px; }
.group .on { background: #fde3a6; border: 1px solid #8c94a8; }
.slider { appearance: none; width: 36px; height: 12px; background: linear-gradient(#bbb, #bbb) center/100% 1px no-repeat; }
.slider::-webkit-slider-thumb { appearance: none; width: 5px; height: 10px; background: #fff; border: 1px solid #3f9f53; border-radius: 1px; }
.group.combos { gap: 1px; padding-right: 0; }
.combo { display: flex; align-items: center; gap: 2px; height: 12px; padding-left: 1px; background: #fff; border: 1px solid #b8cbdf; }
.combo select { appearance: none; flex: 1; height: 10px; }
.combo .chev { width: 7px; height: 10px; }
.chev { background: #cbdaf6; }
.combo.plane { width: 87px; }
.combo.layer { width: 103px; }
.combo.color { width: 71px; }
.swatch { width: 7px; height: 7px; background: #000; }

.workspace { flex: 1; min-height: 0; display: flex; }
.sidebar { flex: none; width: 24px; padding: 0 1px; border-right: 1px solid #c3d0de; background: linear-gradient(90deg, #fdfeff, #edf3fb); }
.sidebar .grip { height: 3px; margin: 1px 1px 0; }
.tools { height: 225px; display: grid; grid-auto-rows: 1fr; }
.tools button { border-top: 1px solid #7d9dbd; background: linear-gradient(#fff, #eaf0f9); }
.tools svg { width: 17px; height: 17px; }

.docks { flex: none; width: 164px; display: flex; flex-direction: column; border-right: 3px solid #c3d4e9; background: #edf2f8; }
.project { flex: 277; display: flex; flex-direction: column; padding: 1px 3px 0 2px; min-height: 0; }
.dockbar { display: flex; align-items: center; gap: 1px; height: 7px; }
.dockbar .grip { flex: 1; height: 4px; }
.x { width: 6px; height: 6px; background: #b9cadd; border: 1px solid #90a4ba; }
.x svg { width: 4px; height: 4px; }
.tabs { display: flex; align-items: end; gap: 1px; height: 18px; padding-top: 1px; }
.tabs button { width: 22px; height: 15px; border: 1px solid #c5cedb; border-bottom: 0; border-radius: 2px 2px 0 0; background: linear-gradient(#fff, #e8eff8); }
.tabs .active { width: 24px; height: 17px; border-top: 1px solid #f3a93c; background: #fff; }
.tabs svg { width: 11px; height: 11px; }
.treebox { flex: 1; padding: 1px; border: 1px solid #c1ccd8; border-width: 1px 2px 1px 1px; background: #fbfdff; }
.treeinner { height: 100%; background: #fff; border: 1px solid #b3cae2; }
.tree { padding-left: 6px; }
.node { display: flex; align-items: center; gap: 2px; height: 12px; }
.tree svg { width: 11px; height: 10px; }
.tree .wide { width: 16px; margin-left: 3px; }
.expander { width: 5px; height: 5px; border: 1px solid #b9c1cc; background: linear-gradient(#66748a, #66748a) center/3px 1px no-repeat; }
.selected { background: #d0d0d0; padding: 0 1px; }
.tree ul { margin-left: 19px; }
.tree ul li::before { content: ""; width: 9px; height: 12px; border: 1px solid #e2e2e2; border-width: 0 0 1px 1px; align-self: start; margin-top: -6px; }
.preview-dock { flex: 122; display: flex; gap: 2px; padding: 4px 3px 2px 2px; border-top: 3px solid #bfd2ea; }
.vbar { width: 6px; display: flex; flex-direction: column; gap: 1px; }
.vbar .grip { flex: 1; width: 4px; background: repeating-linear-gradient(#d3d1cb 0 2px, #e2e0da 2px 4px); }
.notebox { flex: 1; border: 1px solid #b3cae2; border-right-width: 2px; background: #f5f8fd; }
.note { width: 11px; height: 11px; }

.main { flex: 1; min-width: 0; display: flex; flex-direction: column; }
.views { flex: none; height: 13px; display: flex; align-items: center; padding-left: 1px; }
.viewgroup { display: flex; gap: 1px; }
.viewgroup + .viewgroup { margin-left: 2px; padding-left: 1px; border-left: 1px solid #ccd5df; }
.viewgroup svg { width: 11px; height: 11px; }
.canvas { flex: 264; min-height: 0; width: 100%; height: auto; background: #b8c8f0; }
.splitter { flex: none; height: 9px; display: flex; justify-content: center; align-items: center; background: linear-gradient(#b8c8f0 2px, #c5d4ec 2px 6px, #fff 6px); padding-right: 157px; }
.splitter i { border: 3px solid transparent; border-top-color: #173a85; border-bottom: 0; }
.params { flex: 113; min-height: 0; display: flex; }
.params > .grip { width: 4px; background: repeating-linear-gradient(#d3d1cb 0 2px, #e2e0da 2px 4px); margin-left: 2px; }
.paramtabs { flex: none; width: 27px; display: flex; flex-direction: column; justify-content: end; padding: 0 2px 1px 7px; }
.paramtabs button { height: 14px; border: 1px solid #b9c6d4; background: #fff; }
.paramtabs button:first-child { border-left: 2px solid #f3a93c; }
.paramtabs svg { width: 14px; height: 12px; }
.fields { flex: 1; min-width: 0; display: flex; gap: 2px; padding: 1px 0; background: #b3c3d5; }
.col { flex: 193; min-width: 0; display: grid; grid-template-rows: repeat(9, minmax(0, 1fr)); gap: 2px; }
.col.wide { flex: 189; }
.row { display: flex; align-items: center; min-width: 0; overflow: hidden; background: linear-gradient(90deg, #f8f9fd, #dfe7ef); padding-left: 3px; }
.row input:not([type]) { flex: 1; height: 10px; padding-left: 2px; background: #fff; border-left: 1px solid #b3c3d5; }
.row input:disabled { background: #eef1f5; color: #b4bac2; }
.fill { flex: 1; }
.formula { padding: 0; background: linear-gradient(45deg, transparent 50%, #f8b133 50%) right/11px 100% no-repeat, #fff; }
.formula input:not([type]) { background: none; }
.pick { width: 11px; height: 10px; border: 1px solid #8ba4c0; background: #f8fbff; margin-right: 1px; font-weight: 700; }
.pick:disabled { background: #ddd; border-color: #ccc; }
.pick svg { width: 9px; height: 9px; }
.row > .chev { width: 8px; height: 10px; margin-right: 1px; }
.lead { flex: none; width: 34px; display: flex; align-items: center; gap: 2px; color: #234c87; }
.lead svg { height: 10px; width: 14px; }
.lead .tagicon { width: 14px; }
.lead .round { width: 10px; }
.lead.tight { gap: 0; }
.row .inchicon { width: 26px; height: 10px; }
.dashed { outline: 1px dotted #f0883a; outline-offset: -1px; }
.faint { opacity: .2; filter: grayscale(1); }
.inch { position: relative; margin-right: 2px; }
.inch b { position: absolute; left: 1px; top: 0; font-size: 5px; line-height: 6px; }
.chip { background: #2b5a96; color: #fff; font-size: 6px; line-height: 7px; }
input[type="checkbox"], input[type="radio"] { appearance: none; flex: none; width: 6px; height: 6px; border: 1px solid #426ca2; background: #fff; }
input[type="radio"] { border-radius: 50%; border-color: #4f8560; background: #7ac576; }
.off { background: #e8edf3; }

.status { flex: none; height: 6px; display: flex; border-top: 1px solid #ccd6e1; }
.status span:first-child { flex: 1; border-right: 1px solid #c5cdd6; }
.status span:last-child { width: 105px; }

.dialog { position: absolute; left: 45px; top: 183px; width: 341px; background: #f5f8fd; border: 1px solid #999; box-shadow: 1px 2px 7px rgba(0, 0, 0, .5); }
.dlghead { display: flex; align-items: center; height: 16px; padding: 0 1px 0 3px; background: #fff; }
.dlghead h2 { flex: 1; margin-left: 2px; }
.dlghead button { width: 25px; height: 14px; }
.dlghead button svg { width: 8px; height: 8px; }
.dlgbody { display: grid; grid-template-columns: 197fr 134fr; margin: 5px 4px 0; height: 172px; }
.vars { min-width: 0; overflow: hidden; border: 1px solid #b3cae2; background: linear-gradient(90deg, #e9eff8, #fff 40%); }
table { border-collapse: collapse; table-layout: fixed; width: 266px; }
th { height: 14px; padding: 0; font-weight: 400; border-right: 1px solid #cfdbe8; background: #f4f8fd; }
.name { width: 53px; }
.value { width: 56px; }
td { height: 11px; padding: 0 0 0 1px; line-height: 9px; border: 1px solid #b3c5da; border-left: 0; color: #a0a3a8; background: #fff; }
td:first-child { background: linear-gradient(90deg, #eaf0f8, #f5f8fc); }
td:nth-child(2) { padding: 0; color: #222; }
td input { display: block; width: 100%; height: 10px; padding-left: 1px; }
.picked { background: #0a74d8; color: #fff; }
.sketch { min-width: 0; position: relative; border: 1px solid #b9cde0; border-width: 1px 2px 1px 1px; padding: 55px 11px 0 8px; }
.sketch .note { position: absolute; left: 0; top: 0; }
.drawing { width: 100%; height: auto; }
.drawing text { font: 700 11px "Noto Sans", sans-serif; fill: #d05f0c; text-anchor: middle; }
.dlgbuttons { display: flex; justify-content: end; gap: 3px; padding: 11px 4px 2px; }
.dlgbuttons button { width: 47px; height: 14px; border: 1px solid #87a5c2; background: linear-gradient(#f0f5fb, #d5e0ec); }
.dlgstatus { display: flex; justify-content: space-between; height: 18px; line-height: 16px; margin: 0 5px; border-top: 1px solid #d9dde3; }
.sizegrip { width: 5px; height: 5px; align-self: end; margin-bottom: 5px; background: repeating-linear-gradient(135deg, transparent 0 2px, #cfd4da 2px 3px); }
```
